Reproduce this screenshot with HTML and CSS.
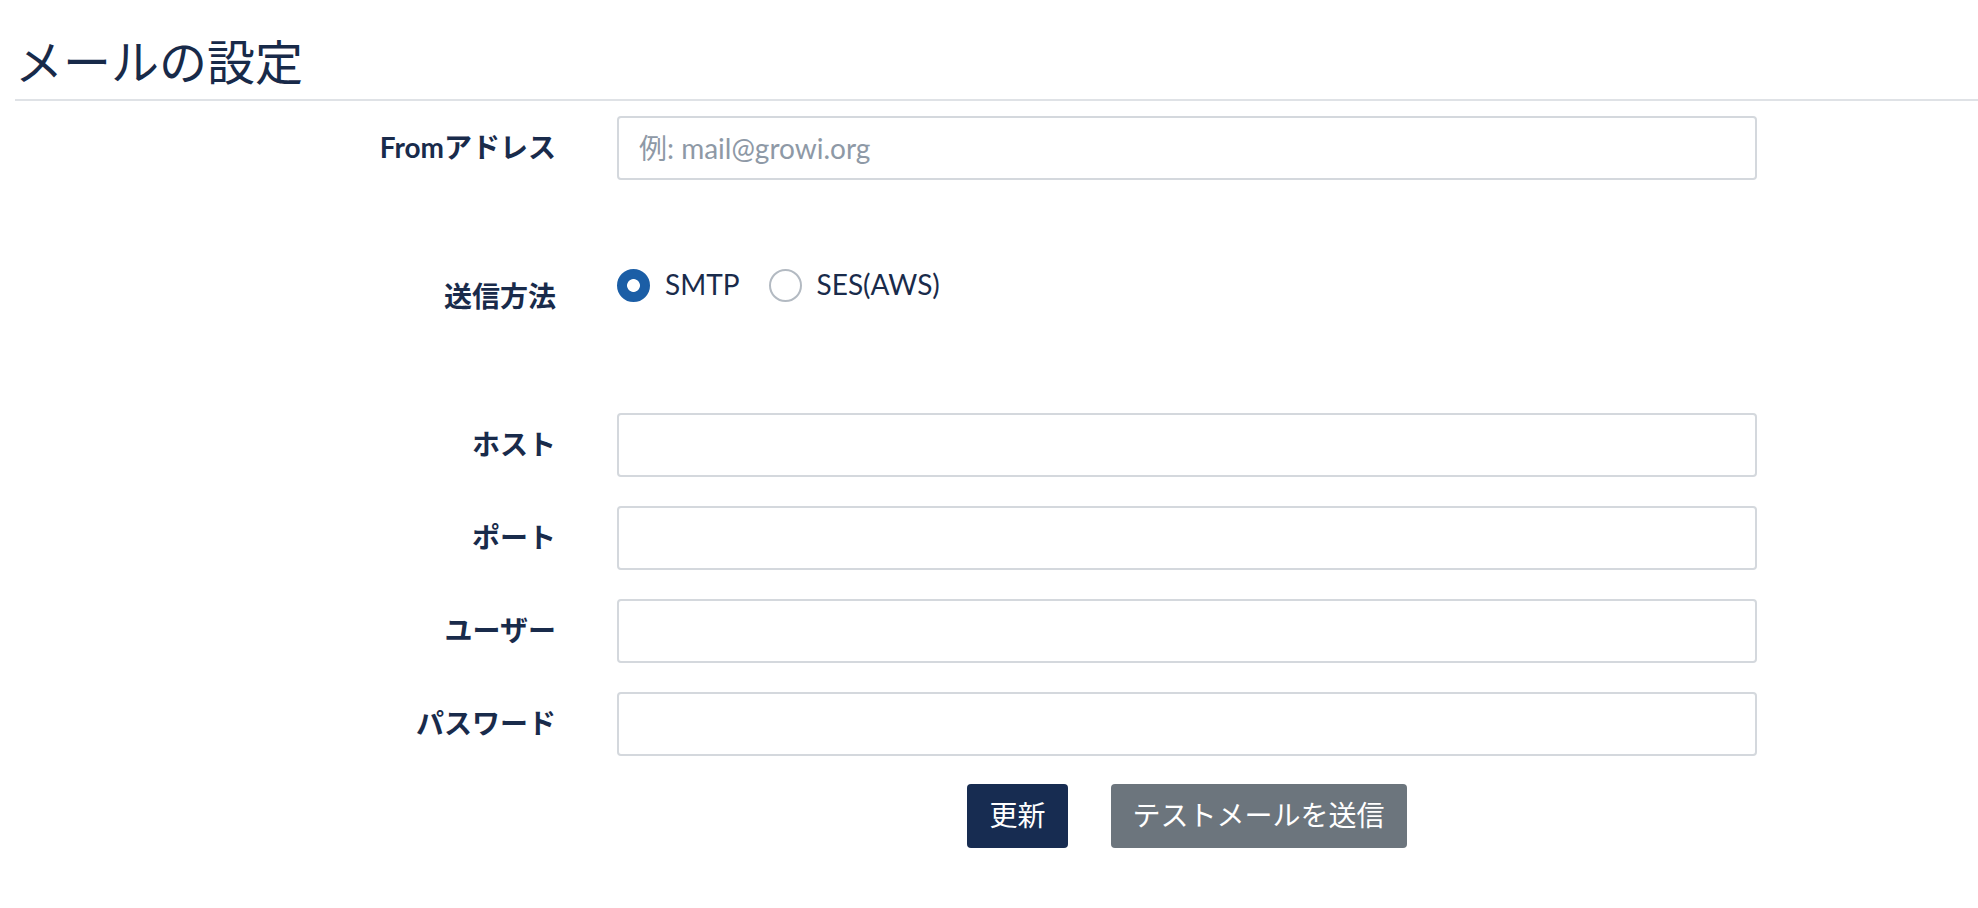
FILE: index.html
```html
<!DOCTYPE html>
<html lang="ja">
<head>
<meta charset="utf-8">
<title>メールの設定</title>
<link rel="stylesheet" href="styles.css">
</head>
<body>
<div class="page">
  <h1 class="title">メールの設定</h1>
  <form class="mail-form">
    <div class="field field-from">
      <label class="field-label" for="from">Fromアドレス</label>
      <input class="field-input" id="from" type="text" placeholder="例: mail@growi.org">
    </div>
    <div class="field field-method">
      <span class="field-label field-label-low">送信方法</span>
      <div class="radio-group">
        <label class="radio"><input class="radio-input" type="radio" name="method" checked><span>SMTP</span></label>
        <label class="radio"><input class="radio-input" type="radio" name="method"><span>SES(AWS)</span></label>
      </div>
    </div>
    <div class="field field-host">
      <label class="field-label" for="host">ホスト</label>
      <input class="field-input" id="host" type="text">
    </div>
    <div class="field">
      <label class="field-label" for="port">ポート</label>
      <input class="field-input" id="port" type="text">
    </div>
    <div class="field">
      <label class="field-label" for="user">ユーザー</label>
      <input class="field-input" id="user" type="text">
    </div>
    <div class="field">
      <label class="field-label" for="pass">パスワード</label>
      <input class="field-input" id="pass" type="password">
    </div>
    <div class="field field-actions">
      <span></span>
      <div class="buttons">
        <button class="btn btn-primary" type="button">更新</button>
        <button class="btn btn-secondary" type="button">テストメールを送信</button>
      </div>
    </div>
  </form>
</div>
</body>
</html>
```
FILE: styles.css
```css
* { box-sizing: border-box; }
html, body { margin: 0; background: #fff; }
body {
  font-family: Lato, "Noto Sans CJK JP", sans-serif;
  font-size: 28px;
  color: #192b4b;
}
.page { padding-left: 15px; }
.title {
  margin: 0;
  padding: 33px 0 8px 0;
  font-size: 48px;
  line-height: 58px;
  font-weight: 400;
  color: #182a49;
  border-bottom: 2px solid #dfe2e6;
}
.mail-form { display: flex; flex-direction: column; }
.field {
  display: grid;
  grid-template-columns: 541px 1140px;
  column-gap: 61px;
  align-items: center;
  min-height: 64px;
  margin-top: 29px;
}
.field-from { margin-top: 15px; }
.field-method { margin-top: 73px; }
.field-host { margin-top: 96px; }
.field-actions { margin-top: 28px; }
.field-label {
  text-align: right;
  font-weight: 700;
  line-height: 1.2;
}
.field-label-low { padding-top: 24px; }
.field-input {
  height: 64px;
  width: 100%;
  border: 2px solid #d4d8dd;
  border-radius: 4px;
  padding: 0 20px;
  font: inherit;
  color: #192b4b;
  outline: none;
  background: #fff;
}
.field-input::placeholder { color: #8e99a6; opacity: 1; }
.radio-group { display: flex; align-items: center; gap: 29px; }
.radio { display: flex; align-items: center; gap: 15px; line-height: 1.2; }
.radio-input {
  appearance: none;
  margin: 0;
  width: 33px;
  height: 33px;
  border-radius: 50%;
  border: 2px solid #b3bac2;
  background: #fff;
}
.radio-input:checked {
  border-color: #1b5ea6;
  background: radial-gradient(circle, #fff 0 6px, #1b5ea6 6.8px);
}
.buttons { display: flex; justify-content: center; gap: 43px; }
.btn {
  height: 64px;
  padding: 0 22px;
  border: 0;
  border-radius: 4px;
  font: inherit;
  color: #fff;
  line-height: 1.2;
}
.btn-primary { background: #172c51; }
.btn-secondary { background: #6c757d; }
```
